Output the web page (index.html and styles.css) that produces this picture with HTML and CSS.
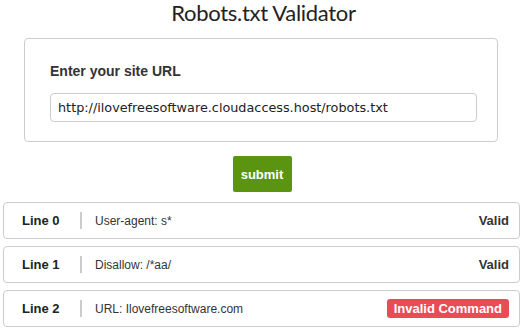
FILE: index.html
```html
<!DOCTYPE html>
<html lang="en">
<head>
    <meta charset="utf-8">
    <title>Robots.txt Validator</title>
    <link rel="stylesheet" href="styles.css">
</head>
<body>
    <h1 class="title">Robots.txt Validator</h1>

    <div class="card">
        <label class="card-label" for="siteUrl">Enter your site URL</label>
        <input class="url-input" id="siteUrl" type="text" value="http://ilovefreesoftware.cloudaccess.host/robots.txt">
    </div>

    <div class="actions">
        <button class="btn-submit">submit</button>
    </div>

    <div class="results">
        <div class="row">
            <span class="row-num">Line 0</span>
            <span class="row-sep"></span>
            <span class="row-text">User-agent: s*</span>
            <span class="row-status">Valid</span>
        </div>
        <div class="row">
            <span class="row-num">Line 1</span>
            <span class="row-sep"></span>
            <span class="row-text">Disallow: /*aa/</span>
            <span class="row-status">Valid</span>
        </div>
        <div class="row">
            <span class="row-num">Line 2</span>
            <span class="row-sep"></span>
            <span class="row-text">URL: Ilovefreesoftware.com</span>
            <span class="row-status badge-invalid">Invalid Command</span>
        </div>
    </div>
</body>
</html>
```

FILE: styles.css
```css
* {
    margin: 0;
    padding: 0;
    box-sizing: border-box;
}

body {
    font-family: 'Liberation Sans', Arial, sans-serif;
    background: #fff;
    color: #333;
    padding: 0 5px 0 3px;
}

.title {
    font-family: Lato, 'Open Sans', sans-serif;
    font-size: 22px;
    font-weight: 400;
    letter-spacing: -0.3px;
    color: #222;
    text-align: center;
    height: 38px;
    line-height: 26px;
    padding-left: 4px;
}

.card {
    margin: 0 22px 0 21px;
    height: 104px;
    border: 1px solid #ccc;
    border-radius: 4px;
    padding: 24px 20px 0 25px;
}

.card-label {
    display: block;
    font-size: 14px;
    font-weight: bold;
    color: #333;
    margin-bottom: 14px;
}

.url-input {
    display: block;
    width: 100%;
    height: 29px;
    border: 1px solid #ccc;
    border-radius: 4px;
    padding: 0 7px;
    font-family: 'DejaVu Sans', sans-serif;
    font-size: 12.8px;
    color: #222;
    outline: none;
}

.actions {
    display: flex;
    justify-content: center;
    padding: 14px 0 10px;
    padding-left: 1px;
}

.btn-submit {
    width: 59px;
    height: 36px;
    background: #5a9410;
    color: #fff;
    border: none;
    border-radius: 2px;
    font-family: 'Liberation Sans', Arial, sans-serif;
    font-size: 13px;
    font-weight: bold;
    cursor: pointer;
}

.results {
    display: flex;
    flex-direction: column;
    gap: 7px;
}

.row {
    display: flex;
    align-items: center;
    height: 37px;
    border: 1px solid #ccc;
    border-radius: 4px;
    padding: 0 10px 0 18px;
    font-size: 12px;
}

.row-num {
    width: 58px;
    font-size: 13px;
    font-weight: bold;
    color: #222;
}

.row-sep {
    width: 2px;
    height: 17px;
    background: #ccc;
    margin-right: 13px;
}

.row-text {
    flex: 1;
    color: #333;
}

.row-status {
    font-size: 13px;
    font-weight: bold;
    color: #333;
}

.badge-invalid {
    background: #e84c55;
    color: #fff;
    border-radius: 3px;
    padding: 3px 7px;
    line-height: 13px;
}
```
